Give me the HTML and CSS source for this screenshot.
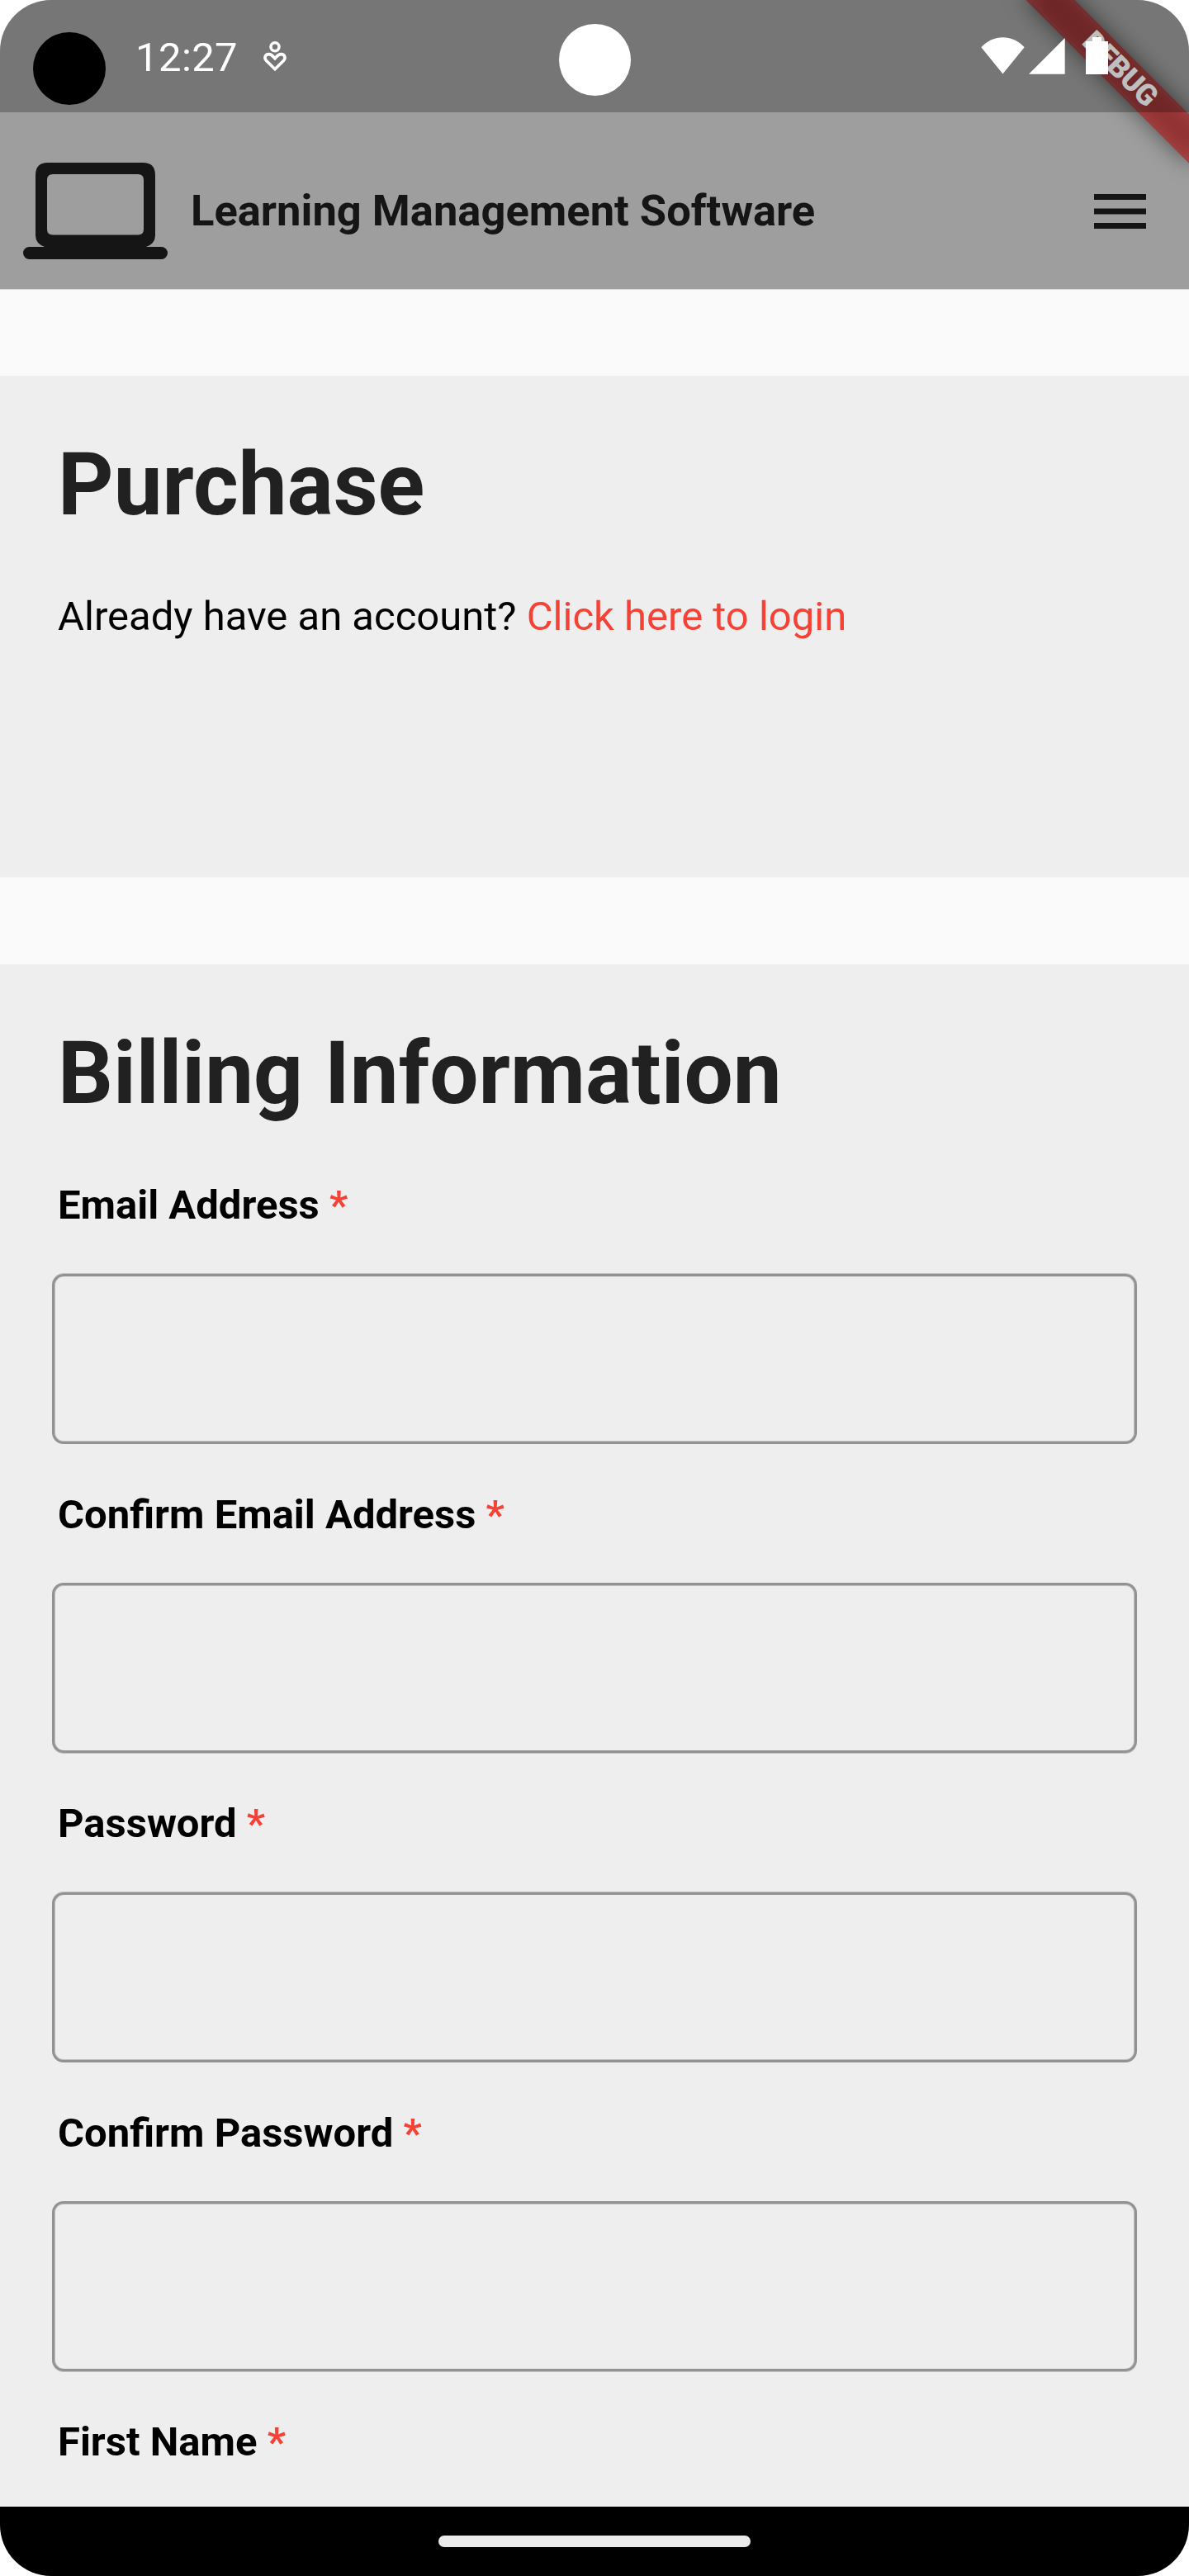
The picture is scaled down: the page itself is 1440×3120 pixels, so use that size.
FILE: index.html
```html
<!DOCTYPE html>
<html lang="en">
<head>
<meta charset="utf-8">
<title>Learning Management Software</title>
<link rel="stylesheet" href="styles.css">
</head>
<body>
<div class="screen">
  <header class="top">
    <div class="debug-banner debug-shadow"></div>
    <div class="debug-banner debug-label">DEBUG</div>
    <div class="status-bar">
      <time class="clock">12:27</time>
      <svg class="status-glyph" viewBox="0 0 30 40" width="30" height="40" fill="none" stroke="#fff" stroke-width="3.6"><circle cx="15" cy="7.8" r="5"/><path d="M15 34.8 4.6 24.6C1.600 21.400 3 16.600 7.600 16.600c3.600 0 4.400 2 7.400 5.200 3-3.200 3.800-5.200 7.400-5.200 4.600 0 6 4.800 3 8z"/></svg>
      <svg class="signals" viewBox="0 0 156 46" width="156" height="46" fill="#fff"><path d="M0.300 12.300C15-3.700 38-3.700 52.700 12.300L26.500 44.400z"/><path d="M58 44.700 101.700 1V44.700z"/><path d="M135 0h11v5h8v40h-27V5h8z"/></svg>
      <span class="dot dot-record"></span>
      <span class="dot dot-camera"></span>
    </div>
    <div class="app-bar">
      <svg class="logo" viewBox="0 0 175 117" width="175" height="117" fill="#151515"><path fill-rule="evenodd" d="M30 0H145Q160 0 160 15V88Q160 98 149 102V105H26V102Q15 98 15 88V15Q15 0 30 0zM36 14Q29 14 29 21V80.500Q29 87.500 36 87.500H139Q146 87.500 146 80.500V21Q146 14 139 14z"/><rect y="102" width="175" height="15" rx="7.500"/></svg>
      <h1 class="app-title">Learning Management Software</h1>
      <svg class="menu" viewBox="0 0 63 42" width="63" height="42" fill="#151515"><path d="M0 0h63v7H0zM0 17.500h63v7H0zM0 35h63v7H0z"/></svg>
    </div>
  </header>
  <main class="content">
    <section class="card card-purchase">
      <h2 class="heading">Purchase</h2>
      <p class="login">Already have an account? <a class="login-link">Click here to login</a></p>
    </section>
    <section class="card card-billing">
      <h2 class="heading">Billing Information</h2>
      <form class="fields">
        <label class="field">
          <span class="label">Email Address <span class="required">*</span></span>
          <input class="input" type="email">
        </label>
        <label class="field">
          <span class="label">Confirm Email Address <span class="required">*</span></span>
          <input class="input" type="email">
        </label>
        <label class="field">
          <span class="label">Password <span class="required">*</span></span>
          <input class="input" type="password">
        </label>
        <label class="field">
          <span class="label">Confirm Password <span class="required">*</span></span>
          <input class="input" type="password">
        </label>
        <label class="field">
          <span class="label">First Name <span class="required">*</span></span>
        </label>
      </form>
    </section>
  </main>
  <footer class="nav-bar"><span class="nav-pill"></span></footer>
</div>
</body>
</html>
```
FILE: styles.css
```css
* {
  box-sizing: border-box;
}

body {
  margin: 0;
  background: #fff;
  font-family: Roboto, sans-serif;
}

.screen {
  display: flex;
  flex-direction: column;
  width: 1440px;
  height: 3120px;
  overflow: hidden;
  border-radius: 62px;
  background: #fafafa;
}

/* Header */
.top {
  position: relative;
  flex: none;
  height: 351px;
  overflow: hidden;
  background: #9e9e9e;
  border-bottom: 1px solid #d8d8d8;
}

.status-bar {
  position: relative;
  display: flex;
  align-items: flex-start;
  height: 136px;
  padding: 41px 96px 0 164px;
  background: rgba(0, 0, 0, 0.25);
}

.clock {
  width: 154px;
  font-size: 49px;
  line-height: 57px;
  letter-spacing: 0.4px;
  color: #fff;
}

.status-glyph {
  margin-top: 8px;
}

.signals {
  margin: 4px 0 0 auto;
}

.dot {
  position: absolute;
  border-radius: 50%;
}

.dot-record {
  left: 40px;
  top: 39px;
  width: 88px;
  height: 88px;
  background: #000;
}

.dot-camera {
  left: 677px;
  top: 29px;
  width: 87px;
  height: 87px;
  background: #fff;
}

/* Corner ribbon */
.debug-banner {
  position: absolute;
  left: 1216.3px;
  top: 62.7px;
  width: 280px;
  height: 42px;
  transform: rotate(45deg);
}

.debug-shadow {
  background: rgba(0, 0, 0, 0.5);
  filter: blur(13.9px);
}

.debug-label {
  background: rgba(183, 28, 28, 0.627);
  color: #fff;
  font-size: 35.7px;
  font-weight: 900;
  letter-spacing: -0.6px;
  line-height: 40px;
  text-align: center;
}

.app-bar {
  display: flex;
  align-items: center;
  height: 214px;
  padding: 25px 52px 0 28px;
}

.app-title {
  margin: 0 auto 0 28px;
  padding-bottom: 2px;
  font-size: 52.5px;
  line-height: 62px;
  color: #151515;
}

/* Content */
.content {
  flex: 1;
  min-height: 0;
  overflow: hidden;
  padding-top: 104px;
}

.card {
  background: #eee;
}

.card-purchase {
  height: 608px;
  padding: 70px 70px 0;
  border-top: 1px solid #f3f3f3;
  border-bottom: 1px solid #f6f6f6;
}

.card-billing {
  height: 1868px;
  margin-top: 105px;
  padding: 71px 63px 0;
}

.heading {
  margin: 0;
  font-size: 105px;
  line-height: 123px;
  color: #212121;
}

.card-billing .heading {
  padding-left: 7px;
}

.login {
  margin: 69px 0 0;
  font-size: 49px;
  line-height: 57px;
  color: #000;
}

.login-link,
.required {
  color: #f44336;
}

.fields {
  margin-top: 69px;
}

.field {
  display: flex;
  flex-direction: column;
  gap: 55px;
  padding-bottom: 57px;
}

.field:nth-child(even) {
  gap: 54px;
}

.label {
  padding-left: 7px;
  font-size: 49px;
  font-weight: 700;
  line-height: 57px;
  color: #000;
}

.input {
  width: 1314px;
  height: 206px;
  margin: 0;
  padding: 0 42px;
  border: 3px solid #929292;
  border-radius: 14px;
  background: transparent;
  font: 49px/57px Roboto, sans-serif;
  outline: none;
  box-shadow: inset 1px 0 #bfbfbf, inset -1px 0 #bfbfbf, inset 0 -1px #bfbfbf, 0 -1px #bfbfbf;
}

.field:nth-child(even) .input {
  box-shadow: inset 1px 0 #bfbfbf, inset -1px 0 #bfbfbf, inset 0 1px #bfbfbf, 0 1px #bfbfbf;
}

/* System navigation */
.nav-bar {
  flex: none;
  display: flex;
  justify-content: center;
  align-items: flex-start;
  height: 84px;
  padding-top: 35px;
  background: #000;
}

.nav-pill {
  width: 378px;
  height: 14px;
  border-radius: 7px;
  background: #ebebeb;
}
```
